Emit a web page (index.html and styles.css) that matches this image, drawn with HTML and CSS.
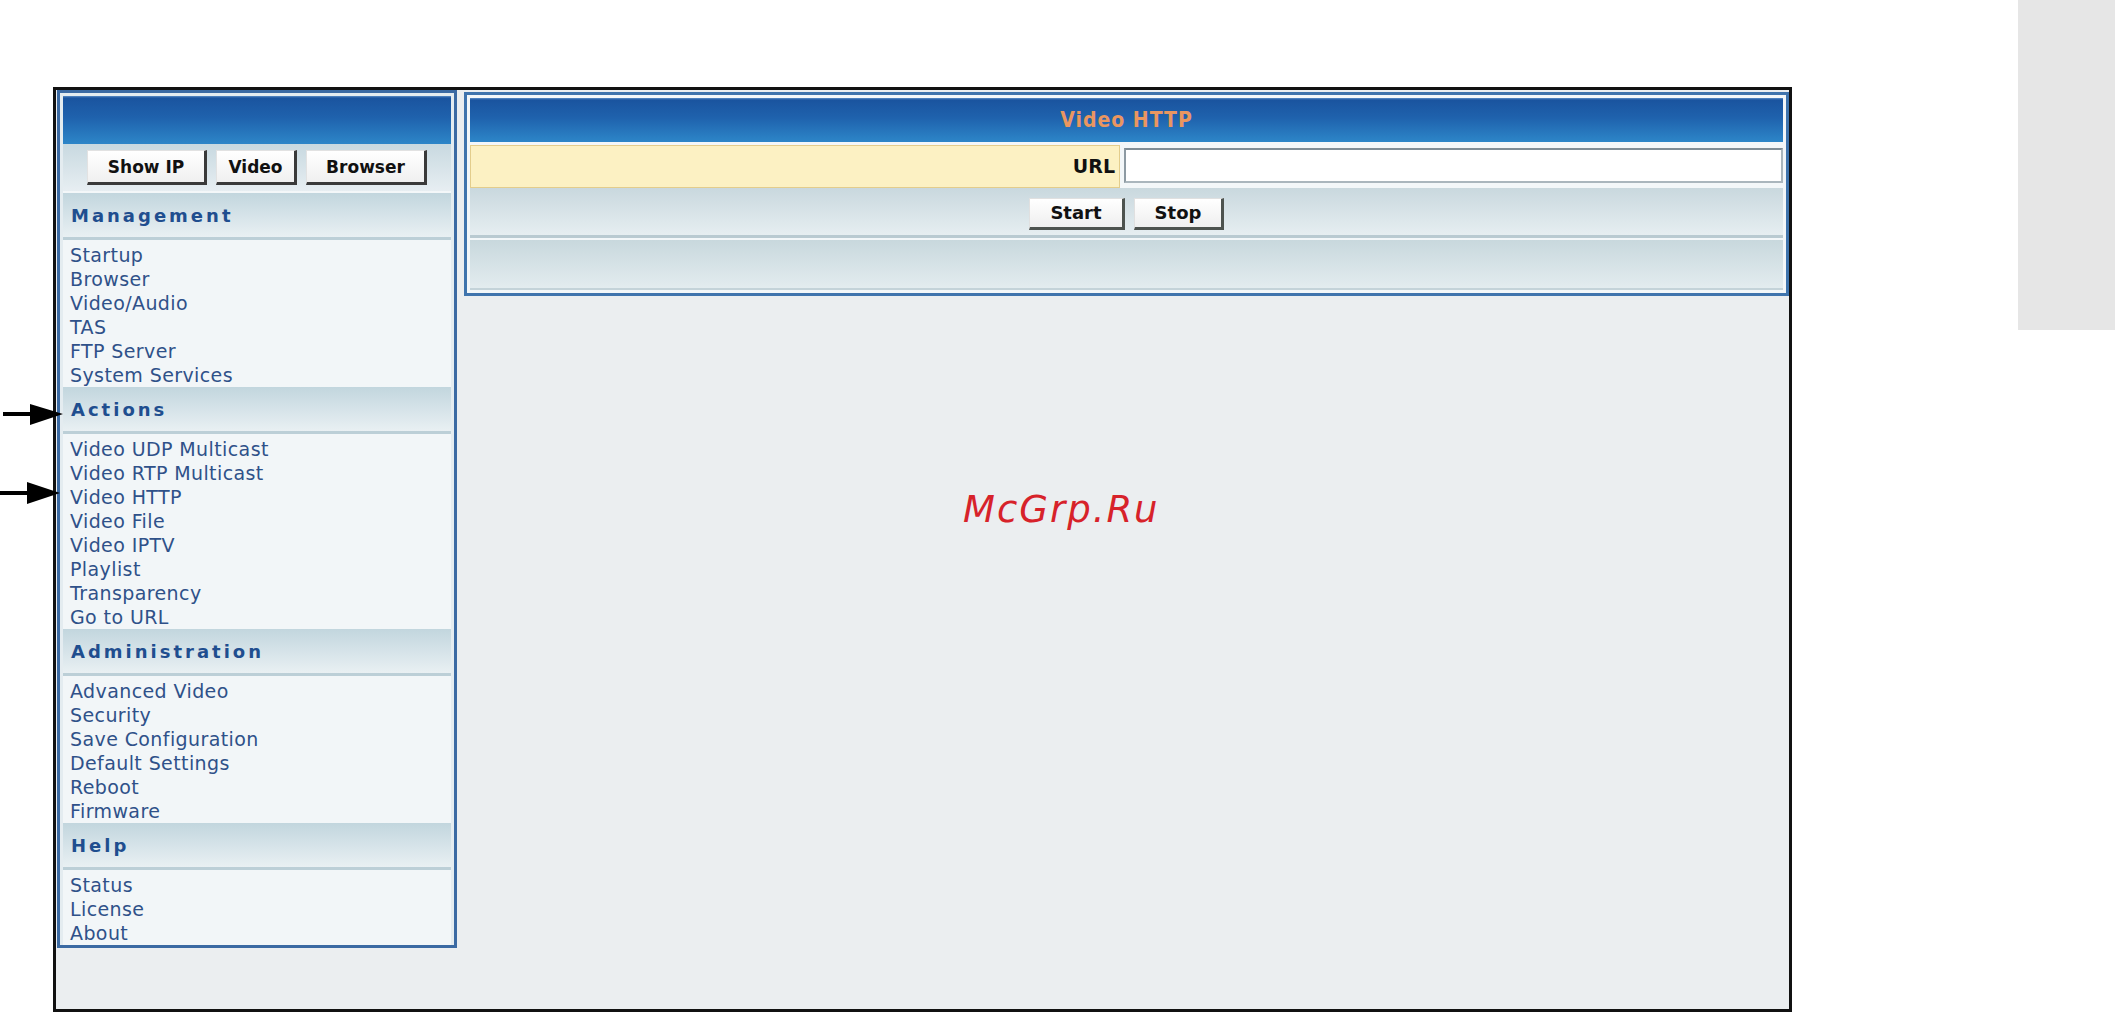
FILE: index.html
```html
<!DOCTYPE html>
<html lang="en">
<head>
  <meta charset="UTF-8">
  <meta name="viewport" content="width=device-width, initial-scale=1.0">
  <title>Video HTTP</title>
  <link rel="stylesheet" href="styles.css">
</head>
<body>
  <div class="frame">
    <div class="sidebar">
      <div class="side-top"></div>
      <div class="quick">
        <button class="qbtn">Show IP</button>
        <button class="qbtn">Video</button>
        <button class="qbtn">Browser</button>
      </div>
      <div class="group">
        <div class="group-title">Management</div>
        <ul class="group-items">
          <li>Startup</li>
          <li>Browser</li>
          <li>Video/Audio</li>
          <li>TAS</li>
          <li>FTP Server</li>
          <li>System Services</li>
        </ul>
      </div>
      <div class="group">
        <div class="group-title">Actions</div>
        <ul class="group-items">
          <li>Video UDP Multicast</li>
          <li>Video RTP Multicast</li>
          <li>Video HTTP</li>
          <li>Video File</li>
          <li>Video IPTV</li>
          <li>Playlist</li>
          <li>Transparency</li>
          <li>Go to URL</li>
        </ul>
      </div>
      <div class="group">
        <div class="group-title">Administration</div>
        <ul class="group-items">
          <li>Advanced Video</li>
          <li>Security</li>
          <li>Save Configuration</li>
          <li>Default Settings</li>
          <li>Reboot</li>
          <li>Firmware</li>
        </ul>
      </div>
      <div class="group">
        <div class="group-title">Help</div>
        <ul class="group-items">
          <li>Status</li>
          <li>License</li>
          <li>About</li>
        </ul>
      </div>
    </div>

    <div class="main">
      <div class="panel">
        <div class="panel-title">Video HTTP</div>
        <div class="url-row">
          <label class="url-label" for="url">URL</label>
          <div class="url-cell"><input id="url" class="url-input" type="text"></div>
        </div>
        <div class="action-row">
          <button class="btn">Start</button>
          <button class="btn">Stop</button>
        </div>
        <div class="empty-row"></div>
      </div>
    </div>
  </div>

  <div class="tab"></div>

  <div class="watermark">McGrp.Ru</div>

  <svg class="arrow arrow-one" width="70" height="30" viewBox="0 0 70 30">
    <line x1="3" y1="14" x2="34" y2="14" stroke="#000" stroke-width="4"/>
    <polygon points="30,4 63,14 30,25" fill="#000"/>
  </svg>
  <svg class="arrow arrow-two" width="70" height="30" viewBox="0 0 70 30">
    <line x1="0" y1="15" x2="30" y2="15" stroke="#000" stroke-width="4"/>
    <polygon points="27,4 60,15 27,26" fill="#000"/>
  </svg>
</body>
</html>
```

FILE: styles.css
```css
body {
  margin: 0;
  background: #ffffff;
  font-family: "DejaVu Sans", Verdana, sans-serif;
  display: flex;
  align-items: flex-start;
  height: 1014px;
  overflow: hidden;
}
.frame {
  margin: 87px 0 0 53px;
  width: 1739px;
  height: 925px;
  box-sizing: border-box;
  border: 3px solid #111111;
  background: #ebeef0;
  display: flex;
  align-items: flex-start;
  gap: 7px;
  padding-left: 1px;
}
.tab {
  margin-left: auto;
  width: 97px;
  height: 330px;
  background: #e6e6e6;
}

/* sidebar */
.sidebar {
  width: 400px;
  box-sizing: border-box;
  border: 3px solid #3b6aa3;
  padding: 3px 3px 0;
  background: #e4ecf0;
}
.side-top {
  height: 48px;
  background: linear-gradient(#5b8dc6 0, #1a549f 2px, #1f62ad 45%, #2d86c8 100%);
}
.quick {
  height: 49px;
  display: flex;
  justify-content: center;
  align-items: center;
  gap: 9px;
  background: linear-gradient(#c8d9e0, #e7eef2);
  box-sizing: border-box;
  border-bottom: 2px solid #f3f7f9;
}
.qbtn {
  height: 35px;
  padding: 0;
  font-family: "DejaVu Sans", Verdana, sans-serif;
  font-weight: bold;
  font-size: 17px;
  color: #111;
  background: linear-gradient(#ffffff, #f0f0f0);
  border-top: 1px solid #e2e2e2;
  border-left: 1px solid #e2e2e2;
  border-right: 3px solid #3a3a3a;
  border-bottom: 3px solid #3a3a3a;
}
.qbtn:nth-child(1) { width: 120px; }
.qbtn:nth-child(2) { width: 81px; }
.qbtn:nth-child(3) { width: 121px; }

.group-title {
  height: 44px;
  line-height: 46px;
  padding-left: 8px;
  font-weight: bold;
  font-size: 18px;
  letter-spacing: 3px;
  color: #1f4e8f;
  background: linear-gradient(#c2d6de, #e9f0f3);
  border-bottom: 3px solid #bccfd7;
}
.group-items {
  list-style: none;
  margin: 0;
  padding: 3px 0 0;
  background: #f2f6f8;
}
.group-items li {
  height: 24px;
  line-height: 24px;
  padding-left: 7px;
  font-size: 19px;
  letter-spacing: 0.4px;
  color: #2f5189;
  white-space: nowrap;
}

/* main panel */
.main {
  flex: 1;
  margin-top: 2px;
}
.panel {
  border: 3px solid #3f74ad;
  padding: 3px;
  background: #f3f7f9;
}
.panel-title {
  height: 44px;
  line-height: 44px;
  text-align: center;
  font-family: "DejaVu Sans Condensed", "DejaVu Sans", sans-serif;
  font-weight: bold;
  font-size: 21px;
  letter-spacing: 1px;
  color: #ea9660;
  background: linear-gradient(#5b8dc6 0, #1a549f 2px, #1f62ad 45%, #2d86c8 100%);
}
.url-row {
  margin-top: 3px;
  height: 43px;
  display: flex;
  gap: 4px;
}
.url-label {
  width: 650px;
  box-sizing: border-box;
  border: 1px solid #e3cd8c;
  background: #fcf1c3;
  text-align: right;
  padding-right: 4px;
  line-height: 41px;
  font-weight: bold;
  font-size: 19px;
  color: #111;
}
.url-cell {
  flex: 1;
  display: flex;
  align-items: center;
  padding-bottom: 2px;
}
.url-input {
  width: 100%;
  height: 35px;
  box-sizing: border-box;
  border: 2px solid #aab6bd;
  border-top-color: #7f8d96;
  border-left-color: #8d9aa2;
  background: #ffffff;
}
.action-row {
  height: 50px;
  display: flex;
  justify-content: center;
  align-items: center;
  gap: 9px;
  background: linear-gradient(#c9d8de, #e6eef1);
  box-sizing: border-box;
  padding-top: 4px;
  border-bottom: 3px solid #b9cad1;
}
.btn {
  height: 32px;
  padding: 0;
  font-family: "DejaVu Sans", Verdana, sans-serif;
  font-weight: bold;
  font-size: 18px;
  color: #111;
  background: linear-gradient(#ffffff, #efefef);
  border-top: 1px solid #e0e0e0;
  border-left: 1px solid #e0e0e0;
  border-right: 3px solid #4d534f;
  border-bottom: 3px solid #4d534f;
}
.btn:nth-child(1) { width: 96px; }
.btn:nth-child(2) { width: 90px; }
.empty-row {
  margin-top: 2px;
  height: 48px;
  background: linear-gradient(#c8d8dd, #e3ecef);
  border-bottom: 2px solid #c4d3d9;
}

/* overlays */
.watermark {
  position: absolute;
  left: 963px;
  top: 491px;
  font-family: "DejaVu Sans", sans-serif;
  font-style: oblique;
  font-size: 37px;
  line-height: 1;
  letter-spacing: 2px;
  color: #d7222a;
}
.arrow {
  position: absolute;
  left: 0;
}
.arrow-one { top: 400px; }
.arrow-two { top: 478px; }
```
